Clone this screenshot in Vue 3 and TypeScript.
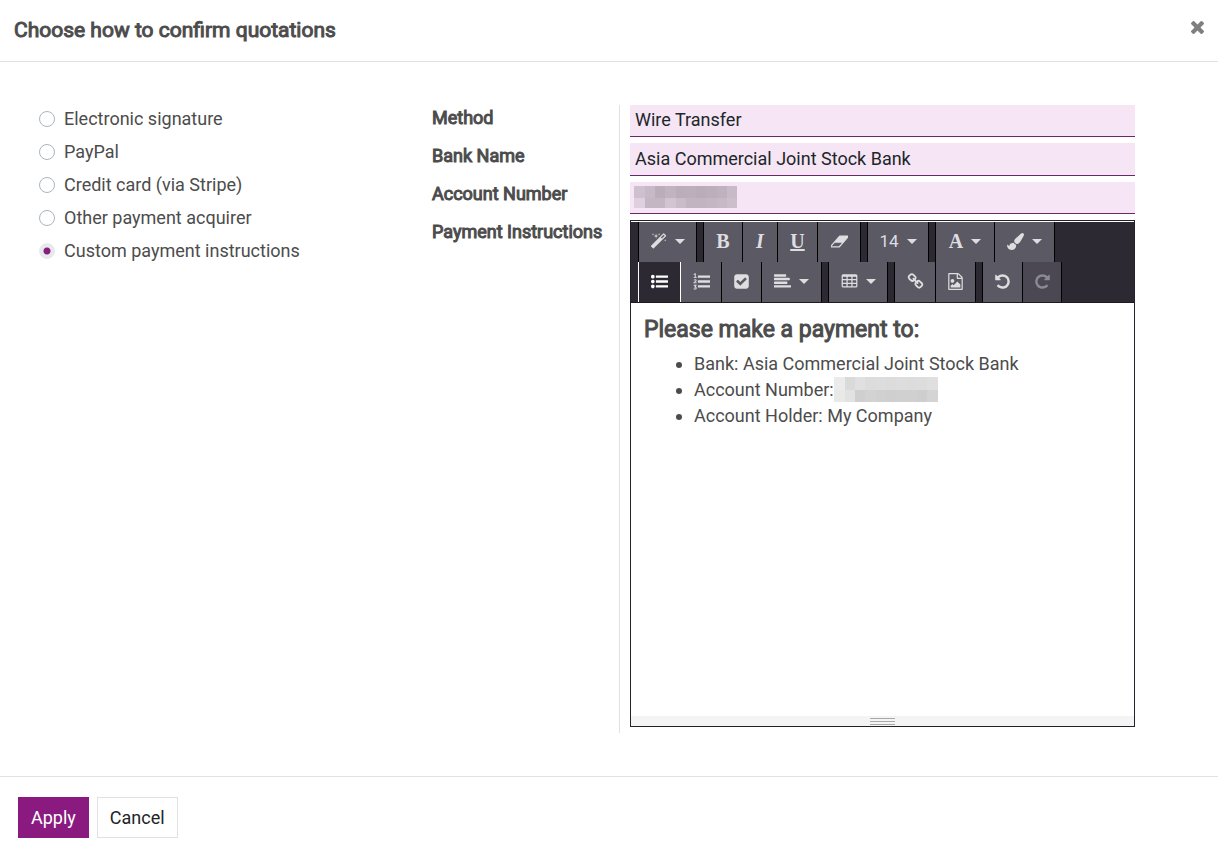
<script setup lang="ts">
import { ref } from 'vue'

interface Tool {
  key: string
  label: string
  glyph?: string
  icon?: string
  caret?: boolean
  active?: boolean
  disabled?: boolean
}

interface Block {
  x: number
  y: number
  w: number
  h: number
  fill: string
}

const selected = ref('custom')
const method = ref('Wire Transfer')
const bankName = ref('Asia Commercial Joint Stock Bank')
const accountNumber = ref('')

const options = [
  { value: 'signature', label: 'Electronic signature' },
  { value: 'paypal', label: 'PayPal' },
  { value: 'stripe', label: 'Credit card (via Stripe)' },
  { value: 'other', label: 'Other payment acquirer' },
  { value: 'custom', label: 'Custom payment instructions' },
]

const dot = (y: number) => `M384 ${y}q0 80-56 136t-136 56-136-56-56-136 56-136 136-56 136 56 56 136z`
const bar = (y: number) =>
  `M1792 ${y}v192q0 13-9.5 22.5t-22.5 9.5h-1216q-13 0-22.5-9.5t-9.5-22.5v-192q0-13 9.5-22.5t22.5-9.5h1216q13 0 22.5 9.5t9.5 22.5z`
const line = (x: number, y: number) =>
  `M${x} ${y}v128q0 26-19 45t-45 19h-${x - 128}q-26 0-45-19t-19-45v-128q0-26 19-45t45-19h${x - 128}q26 0 45 19t19 45z`
const cell = (x: number, y: number) => `M${x} ${y}h320q32 0 32 32v192q0 32-32 32h-320q-32 0-32-32v-192q0-32 32-32z`

const undoPath =
  'M1664 896q0 156-61 298t-164 245-245 164-298 61q-172 0-327-72.5t-264-204.5q-7-10-6.5-22.5t8.5-20.5l137-138q10-9 25-9 16 2 23 12 73 95 179 147t225 52q104 0 198.5-40.5t163.5-109.5 109.5-163.5 40.5-198.5-40.5-198.5-109.5-163.5-163.5-109.5-198.5-40.5q-98 0-188 35.5t-160 101.5l137 138q31 30 14 69-17 40-59 40h-448q-26 0-45-19t-19-45v-448q0-42 40-59 39-17 69 14l130 129q107-101 244.5-156.5t284.5-55.5q156 0 298 61t245 164 164 245 61 298z'

const icons: Record<string, string> = {
  magic:
    'M1254 581l293-293-107-107-293 293zm447-293q0 27-18 45l-1286 1286q-18 18-45 18t-45-18l-198-198q-18-18-18-45t18-45l1286-1286q18-18 45-18t45 18l198 198q18 18 18 45zm-1351-190l98 30-98 30-30 98-30-98-98-30 98-30 30-98zm350 162l196 60-196 60-60 196-60-196-196-60 196-60 60-196zm930 478l98 30-98 30-30 98-30-98-98-30 98-30 30-98zm-640-640l98 30-98 30-30 98-30-98-98-30 98-30 30-98z',
  eraser:
    'M832 1408l336-384h-768l-336 384h768zm1013-1077q15 34 9.500 71.500t-30.500 65.500l-896 1024q-38 44-96 44h-768q-38 0-69.500-20.500t-47.500-54.500q-15-34-9.500-71.500t30.500-65.500l896-1024q38-44 96-44h768q38 0 69.500 20.500t47.500 54.500z',
  brush:
    'M1615 0q70 0 122.500 46.500t52.500 116.500q0 63-45 151-332 629-465 752-97 91-218 91-126 0-216.500-92.500t-90.500-219.500q0-128 92-212l638-579q59-54 130-54zm-909 1034q39 76 106.500 130t150.500 76l1 71q4 213-129.500 347t-348.500 134q-123 0-218-46.500t-152.500-127.500-86.500-183-29-220q7 5 41 30t62 44.500 59 36.500 46 17q41 0 55-37 25-66 57.500-112.500t69.500-76 88-47.500 103-25.500 125-10.500z',
  ul: dot(1408) + dot(896) + dot(384) + bar(1312) + bar(800) + bar(288),
  ol:
    bar(1312) +
    bar(800) +
    bar(288) +
    'M60 130L200 20h90v420h110v90H70v-90h110V160l-90 60zM60 760q40-110 165-110 160 0 160 130 0 70-80 130l-100 80h185v90H50v-90l160-130q60-50 60-80 0-45-50-45-50 0-75 60zM70 1250h310v80l-100 110q120 20 120 140 0 160-180 160-110 0-170-60l50-80q50 45 110 45 80 0 80-60 0-70-140-62l-25-50 100-130H70z',
  check:
    'M813 1299l614-614q19-19 19-45t-19-45l-102-102q-19-19-45-19t-45 19l-467 467-211-211q-19-19-45-19t-45 19l-102 102q-19 19-19 45t19 45l358 358q19 19 45 19t45-19zm851-883v960q0 119-84.500 203.500t-203.500 84.500h-960q-119 0-203.500-84.500t-84.500-203.500v-960q0-119 84.500-203.500t203.500-84.500h960q119 0 203.500 84.500t84.500 203.500z',
  align: line(1792, 1344) + line(1408, 960) + line(1664, 576) + line(1280, 192),
  table:
    'M224 128h1344q160 0 160 160v1088q0 160-160 160H224q-160 0-160-160V288q0-160 160-160z' +
    [224, 736, 1248].map((x) => [384, 768, 1152].map((y) => cell(x, y)).join('')).join(''),
  link: 'M1520 1216q0-40-28-68l-208-208q-28-28-68-28-42 0-72 32 3 3 19 18.500t21.500 21.500 15 19 13 25.500 3.500 27.500q0 40-28 68t-68 28q-15 0-27.500-3.500t-25.500-13-19-15-21.500-21.500-18.500-19q-33 31-33 73 0 40 28 68l206 207q27 27 68 27 40 0 68-26l147-146q28-28 28-67zm-703-705q0-40-28-68l-206-207q-28-28-68-28-39 0-68 27l-147 146q-28 28-28 67 0 40 28 68l208 208q27 27 68 27 42 0 72-31-3-3-19-18.500t-21.500-21.500-15-19-13-25.500-3.500-27.500q0-40 28-68t68-28q15 0 27.500 3.500t25.500 13 19 15 21.500 21.500 18.500 19q33-31 33-73zm895 705q0 120-85 203l-147 146q-83 83-203 83-121 0-204-85l-206-207q-83-83-83-203 0-123 88-209l-88-88q-86 88-208 88-120 0-204-84l-208-208q-84-84-84-204t85-203l147-146q83-83 203-83 121 0 204 85l206 207q83 83 83 203 0 123-88 209l88 88q86-88 208-88 120 0 204 84l208 208q84 84 84 204z',
  image:
    'M1596 380q28 28 48 76t20 88v1152q0 40-28 68t-68 28h-1344q-40 0-68-28t-28-68v-1600q0-40 28-68t68-28h896q40 0 88 20t76 48zm-444-244v376h376q-10-29-22-41l-313-313q-12-12-41-22zm384 1528v-1024h-416q-40 0-68-28t-28-68v-416h-768v1536h1280zm-128-448v320h-1024v-192l192-192 128 128 384-384zm-832-192q-80 0-136-56t-56-136 56-136 136-56 136 56 56 136-56 136-136 56z',
  undo: undoPath,
  redo: undoPath,
}

const groups: Tool[][] = [
  [{ key: 'style', label: 'Style', icon: 'magic', caret: true }],
  [
    { key: 'bold', label: 'Bold', glyph: 'B' },
    { key: 'italic', label: 'Italic', glyph: 'I' },
    { key: 'underline', label: 'Underline', glyph: 'U' },
    { key: 'eraser', label: 'Remove font style', icon: 'eraser' },
  ],
  [{ key: 'size', label: 'Font size', glyph: '14', caret: true }],
  [
    { key: 'color', label: 'Font color', glyph: 'A', caret: true },
    { key: 'highlight', label: 'Background color', icon: 'brush', caret: true },
  ],
  [
    { key: 'ul', label: 'Unordered list', icon: 'ul', active: true },
    { key: 'ol', label: 'Ordered list', icon: 'ol' },
    { key: 'check', label: 'Checklist', icon: 'check' },
    { key: 'align', label: 'Paragraph', icon: 'align', caret: true },
  ],
  [{ key: 'table', label: 'Table', icon: 'table', caret: true }],
  [
    { key: 'link', label: 'Link', icon: 'link' },
    { key: 'image', label: 'Picture', icon: 'image' },
  ],
  [
    { key: 'undo', label: 'Undo', icon: 'undo' },
    { key: 'redo', label: 'Redo', icon: 'redo', disabled: true },
  ],
]

function mosaic(cols: number[], rows: number[], fills: string[][]): Block[] {
  const blocks: Block[] = []
  rows.slice(0, -1).forEach((y, r) => {
    cols.slice(0, -1).forEach((x, c) => {
      blocks.push({ x, y, w: cols[c + 1] - x, h: rows[r + 1] - y, fill: fills[r][c] })
    })
  })
  return blocks
}

const maskedField = mosaic(
  [0, 11, 21, 31, 42, 52, 62, 72, 83, 93, 103],
  [0, 12, 22],
  [
    ['#cfc0cf', '#c8b9c7', '#bcadba', '#c2b3c0', '#bbadba', '#bdaebc', '#bbacb9', '#bdaebb', '#c0b1bf', '#c9bac9'],
    ['#e0d0df', '#c4b6c3', '#c4b6c3', '#d3c4d2', '#cbbcc9', '#c2b4c1', '#c3b4c2', '#c5b6c3', '#c8b9c7', '#cdbecc'],
  ],
)
const maskedText = mosaic(
  [0, 11, 21, 31, 42, 52, 62, 73, 83, 93, 104],
  [0, 13, 25],
  [
    ['#ebebeb', '#dadada', '#e0e0e0', '#dcdcdc', '#dddddd', '#dcdcdc', '#dddddd', '#dcdcdc', '#dddddd', '#dfdfdf'],
    ['#e9e9e8', '#e2e2e2', '#cfcfcf', '#d2d2d2', '#d0d0d0', '#cfcfcf', '#d0d0d0', '#d0d0d0', '#cecece', '#d4d4d4'],
  ],
)
</script>

<template>
  <section class="dialog" role="dialog" aria-labelledby="dialog-title">
    <header class="head">
      <h1 id="dialog-title">Choose how to confirm quotations</h1>
      <button type="button" class="close" aria-label="Close">
        <svg viewBox="302 366 1188 1188" width="13" height="13">
          <path
            fill="currentColor"
            d="M1490 1322q0 40-28 68l-136 136q-28 28-68 28t-68-28l-294-294-294 294q-28 28-68 28t-68-28l-136-136q-28-28-28-68t28-68l294-294-294-294q-28-28-28-68t28-68l136-136q28-28 68-28t68 28l294 294 294-294q28-28 68-28t68 28l136 136q28 28 28 68t-28 68l-294 294 294 294q28 28 28 68z"
          />
        </svg>
      </button>
    </header>

    <main class="body">
      <div class="options" role="radiogroup" aria-label="Confirmation method">
        <label v-for="o in options" :key="o.value" class="option">
          <input v-model="selected" type="radio" name="confirmation" :value="o.value" />
          <span>{{ o.label }}</span>
        </label>
      </div>

      <div class="labels">
        <label for="method">Method</label>
        <label for="bank">Bank Name</label>
        <label for="account">Account Number</label>
        <label id="instructions-label">Payment Instructions</label>
      </div>

      <div class="fields">
        <input id="method" v-model="method" class="field" type="text" />
        <input id="bank" v-model="bankName" class="field" type="text" />
        <div class="masked">
          <input id="account" v-model="accountNumber" class="field" type="text" />
          <svg class="mask" width="103" height="22" aria-hidden="true">
            <rect v-for="(b, i) in maskedField" :key="i" :x="b.x" :y="b.y" :width="b.w" :height="b.h" :fill="b.fill" />
          </svg>
        </div>

        <div class="editor">
          <div class="toolbar" role="toolbar" aria-label="Formatting">
            <div v-for="(group, g) in groups" :key="g" class="group">
              <button
                v-for="t in group"
                :key="t.key"
                type="button"
                class="tool"
                :class="[t.key, { active: t.active }]"
                :disabled="t.disabled"
                :aria-label="t.label"
              >
                <span v-if="t.glyph" class="glyph">{{ t.glyph }}</span>
                <svg v-else class="icon" viewBox="0 0 1792 1792">
                  <path :d="icons[t.icon!]" fill="currentColor" fill-rule="evenodd" />
                </svg>
                <span v-if="t.caret" class="caret"></span>
              </button>
            </div>
          </div>
          <div class="content" contenteditable="true" role="textbox" aria-labelledby="instructions-label">
            <h2>Please make a payment to:</h2>
            <ul>
              <li>Bank: Asia Commercial Joint Stock Bank</li>
              <li>
                Account Number:<svg class="inline-mask" width="104" height="25" aria-hidden="true">
                  <rect v-for="(b, i) in maskedText" :key="i" :x="b.x" :y="b.y" :width="b.w" :height="b.h" :fill="b.fill" />
                </svg>
              </li>
              <li>Account Holder: My Company</li>
            </ul>
          </div>
          <div class="resize"><i></i><i></i><i></i></div>
        </div>
      </div>
    </main>

    <footer class="foot">
      <button type="button" class="btn primary">Apply</button>
      <button type="button" class="btn">Cancel</button>
    </footer>
  </section>
</template>

<style>
body {
  margin: 0;
  background: #fff;
}
</style>

<style scoped>
.dialog {
  display: flex;
  flex-direction: column;
  min-height: 100vh;
  box-sizing: border-box;
  font-family: Roboto, 'Liberation Sans', sans-serif;
  font-size: 18px;
  line-height: 26px;
  color: #4c4c4c;
}
.dialog * {
  box-sizing: border-box;
}
button,
input {
  font: inherit;
}
.head {
  display: flex;
  align-items: center;
  justify-content: space-between;
  height: 62px;
  padding: 0 14px 1px;
  border-bottom: 1px solid #dee2e6;
}
h1 {
  margin: 0;
  font-size: 21px;
  line-height: 30px;
  font-weight: 400;
  -webkit-text-stroke: 1px currentColor;
}
.close {
  display: flex;
  margin: 0 0 6px;
  padding: 0;
  border: 0;
  background: none;
  color: #7f7f7f;
}
.body {
  flex: 1;
  display: grid;
  grid-template-columns: 393fr 187px 516fr;
  padding: 43px 83px 43px 39px;
}
.options {
  display: flex;
  flex-direction: column;
  padding-top: 1px;
}
.option {
  display: flex;
  align-items: center;
  gap: 9px;
  height: 26px;
  margin-bottom: 7px;
}
.option input {
  appearance: none;
  width: 16px;
  height: 16px;
  margin: 0;
  border: 1px solid #adb5bd;
  border-radius: 50%;
  background: #fff;
}
.option input:checked {
  border-color: #e9e9ed;
  background: radial-gradient(circle, #85217b 3px, #e9e9ed 4px);
}
.labels {
  display: flex;
  flex-direction: column;
  gap: 12px;
  -webkit-text-stroke: 1px currentColor;
}
.fields {
  display: flex;
  flex-direction: column;
  gap: 6px;
  padding-left: 10px;
  border-left: 1px solid #dee2e6;
  padding-bottom: 6px;
}
.field {
  display: block;
  width: 100%;
  height: 32px;
  margin: 0;
  padding: 0 5px 2px;
  border: 0;
  border-bottom: 1px solid #68286b;
  border-radius: 0;
  background: #f6e6f5;
  color: #212529;
  outline: none;
}
#bank {
  height: 33px;
}
.masked {
  position: relative;
}
.mask {
  position: absolute;
  left: 4px;
  top: 4px;
}
.editor {
  flex: 1;
  display: flex;
  flex-direction: column;
  padding-top: 1px;
  border: 1px solid #24212a;
}
.toolbar {
  display: flex;
  flex-wrap: wrap;
  column-gap: 6px;
  padding-left: 7px;
  background: #2c2933;
  border-bottom: 1px solid #1d1b22;
}
.group {
  display: flex;
  border-left: 1px solid #000;
}
.tool {
  display: flex;
  align-items: center;
  justify-content: center;
  gap: 8px;
  width: 41px;
  height: 40px;
  padding: 0 0 2px;
  border: 0;
  border-right: 1px solid #000;
  border-radius: 0;
  background: #5b5964;
  color: #dedee0;
}
.style {
  width: 58px;
}
.color,
.table {
  width: 59px;
}
.bold {
  width: 39px;
}
.italic {
  width: 35px;
}
.eraser {
  width: 43px;
}
.underline,
.check,
.image,
.undo {
  width: 40px;
}
.redo {
  width: 39px;
}
.size {
  width: 61px;
}
.align,
.highlight {
  width: 60px;
}
.ul {
  width: 42px;
}
.tool.active {
  background: #2c2933;
  color: #fff;
  border-right-color: #fff;
  box-shadow: -1px 0 0 #fff;
}
.tool:disabled {
  background: #4b4853;
  color: #8b8991;
}
.icon {
  display: block;
  width: 17px;
  height: 17px;
}
.redo .icon {
  transform: scaleX(-1);
}
.glyph {
  font-family: 'Liberation Serif', serif;
  font-size: 20px;
  font-weight: 700;
  line-height: 24px;
}
.italic .glyph {
  font-style: italic;
}
.underline .glyph {
  text-decoration: underline;
}
.size .glyph {
  font-family: Roboto, sans-serif;
  font-size: 17px;
  font-weight: 400;
}
.caret {
  border: 5px solid transparent;
  border-top-color: currentColor;
  border-bottom: 0;
}
.content {
  flex: 1;
  padding: 12px 13px;
  outline: none;
}
h2 {
  margin: 0 0 6px;
  font-size: 23px;
  line-height: 30px;
  font-weight: 400;
  -webkit-text-stroke: 1px currentColor;
}
ul {
  margin: 0;
  padding-left: 50px;
}
li {
  height: 26px;
}
.inline-mask {
  vertical-align: top;
}
.resize {
  display: flex;
  flex-direction: column;
  align-items: center;
  gap: 2px;
  height: 10px;
  padding-top: 2px;
  background: #f4f4f4;
}
.resize i {
  width: 25px;
  height: 1px;
  background: #a9a9a9;
}
.foot {
  display: flex;
  gap: 8px;
  height: 81px;
  padding: 20px 18px;
  border-top: 1px solid #dee2e6;
}
.btn {
  height: 41px;
  padding: 0 12px;
  border: 1px solid #dee2e6;
  background: #fff;
  color: #212529;
}
.btn.primary {
  border-color: #8b1a80;
  background: #8b1a80;
  color: #fff;
}
</style>
